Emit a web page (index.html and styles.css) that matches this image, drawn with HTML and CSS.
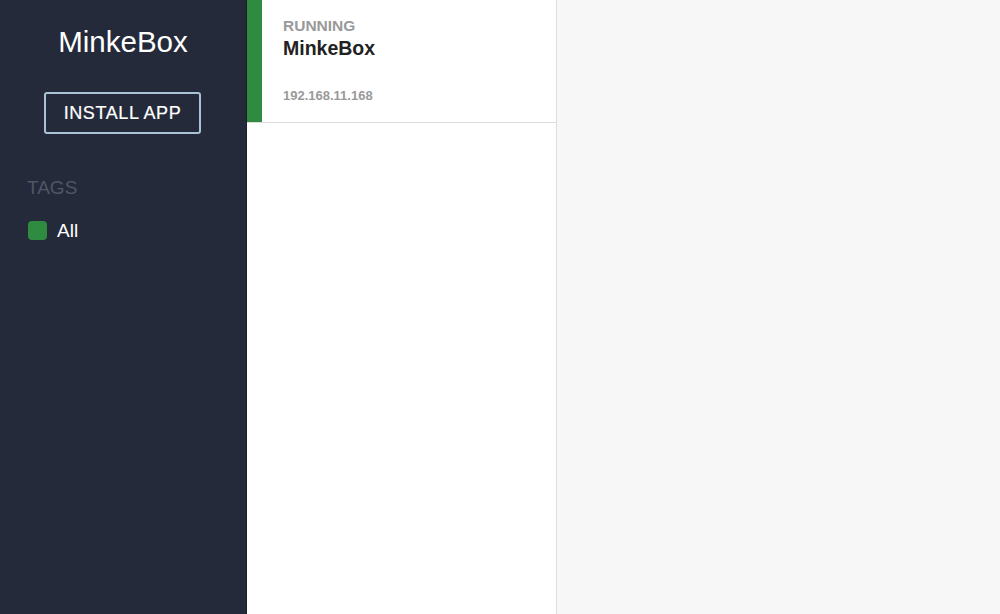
FILE: index.html
```html
<!DOCTYPE html>
<html>
<head>
<meta charset="utf-8">
<link rel="stylesheet" href="styles.css">
</head>
<body>
<div class="app">
  <aside class="sidebar">
    <div class="brand">MinkeBox</div>
    <div class="btn-wrap"><button class="install">INSTALL APP</button></div>
    <div class="tags-title">TAGS</div>
    <div class="tag"><span class="swatch"></span><span class="tag-name">All</span></div>
  </aside>
  <section class="list">
    <div class="card">
      <div class="bar"></div>
      <div class="card-body">
        <div class="status">RUNNING</div>
        <div class="name">MinkeBox</div>
        <div class="ip">192.168.11.168</div>
      </div>
    </div>
  </section>
  <main class="detail"></main>
</div>
</body>
</html>
```

FILE: styles.css
```css
html, body { margin: 0; padding: 0; height: 100%; }
body { font-family: "Liberation Sans", Arial, sans-serif; }
.app { display: flex; height: 614px; width: 1000px; }
.sidebar { width: 246px; background: #242a3a; border-right: 1px solid #1b1f2b; display: flex; flex-direction: column; }
.brand { color: #fff; font-size: 29.5px; text-align: center; margin-top: 25px; line-height: 34px; }
.btn-wrap { display: flex; justify-content: center; margin-top: 33px; padding-right: 1px; }
.install { width: 157px; height: 42px; background: #242a3a; border: 2px solid #a9c3d6; border-radius: 3px; color: #fff; font-family: "Liberation Sans", Arial, sans-serif; font-size: 18px; letter-spacing: 0.6px; padding: 0; -webkit-text-stroke: 0.2px #fff; }
.tags-title { color: #4f5666; font-size: 19px; margin: 43px 0 0 27px; line-height: 22px; }
.tag { display: flex; align-items: center; margin: 20px 0 0 28px; }
.swatch { width: 19px; height: 19px; background: #2e8b3f; border-radius: 4px; }
.tag-name { color: #fff; font-size: 19px; margin-left: 10px; position: relative; top: 1px; }
.list { width: 309px; background: #fff; border-right: 1px solid #dcdcdc; }
.card { display: flex; height: 122px; border-bottom: 1px solid #dcdcdc; }
.bar { width: 15px; background: #2e8b3f; }
.card-body { padding: 17px 0 0 21px; display: flex; flex-direction: column; font-weight: bold; }
.status { color: #999; font-size: 15.5px; line-height: 18px; }
.name { color: #222; font-size: 19.5px; line-height: 22px; margin-top: 2px; }
.ip { color: #999; font-size: 13px; line-height: 15px; margin-top: 29px; }
.detail { flex: 1; background: #f7f7f7; }
```
